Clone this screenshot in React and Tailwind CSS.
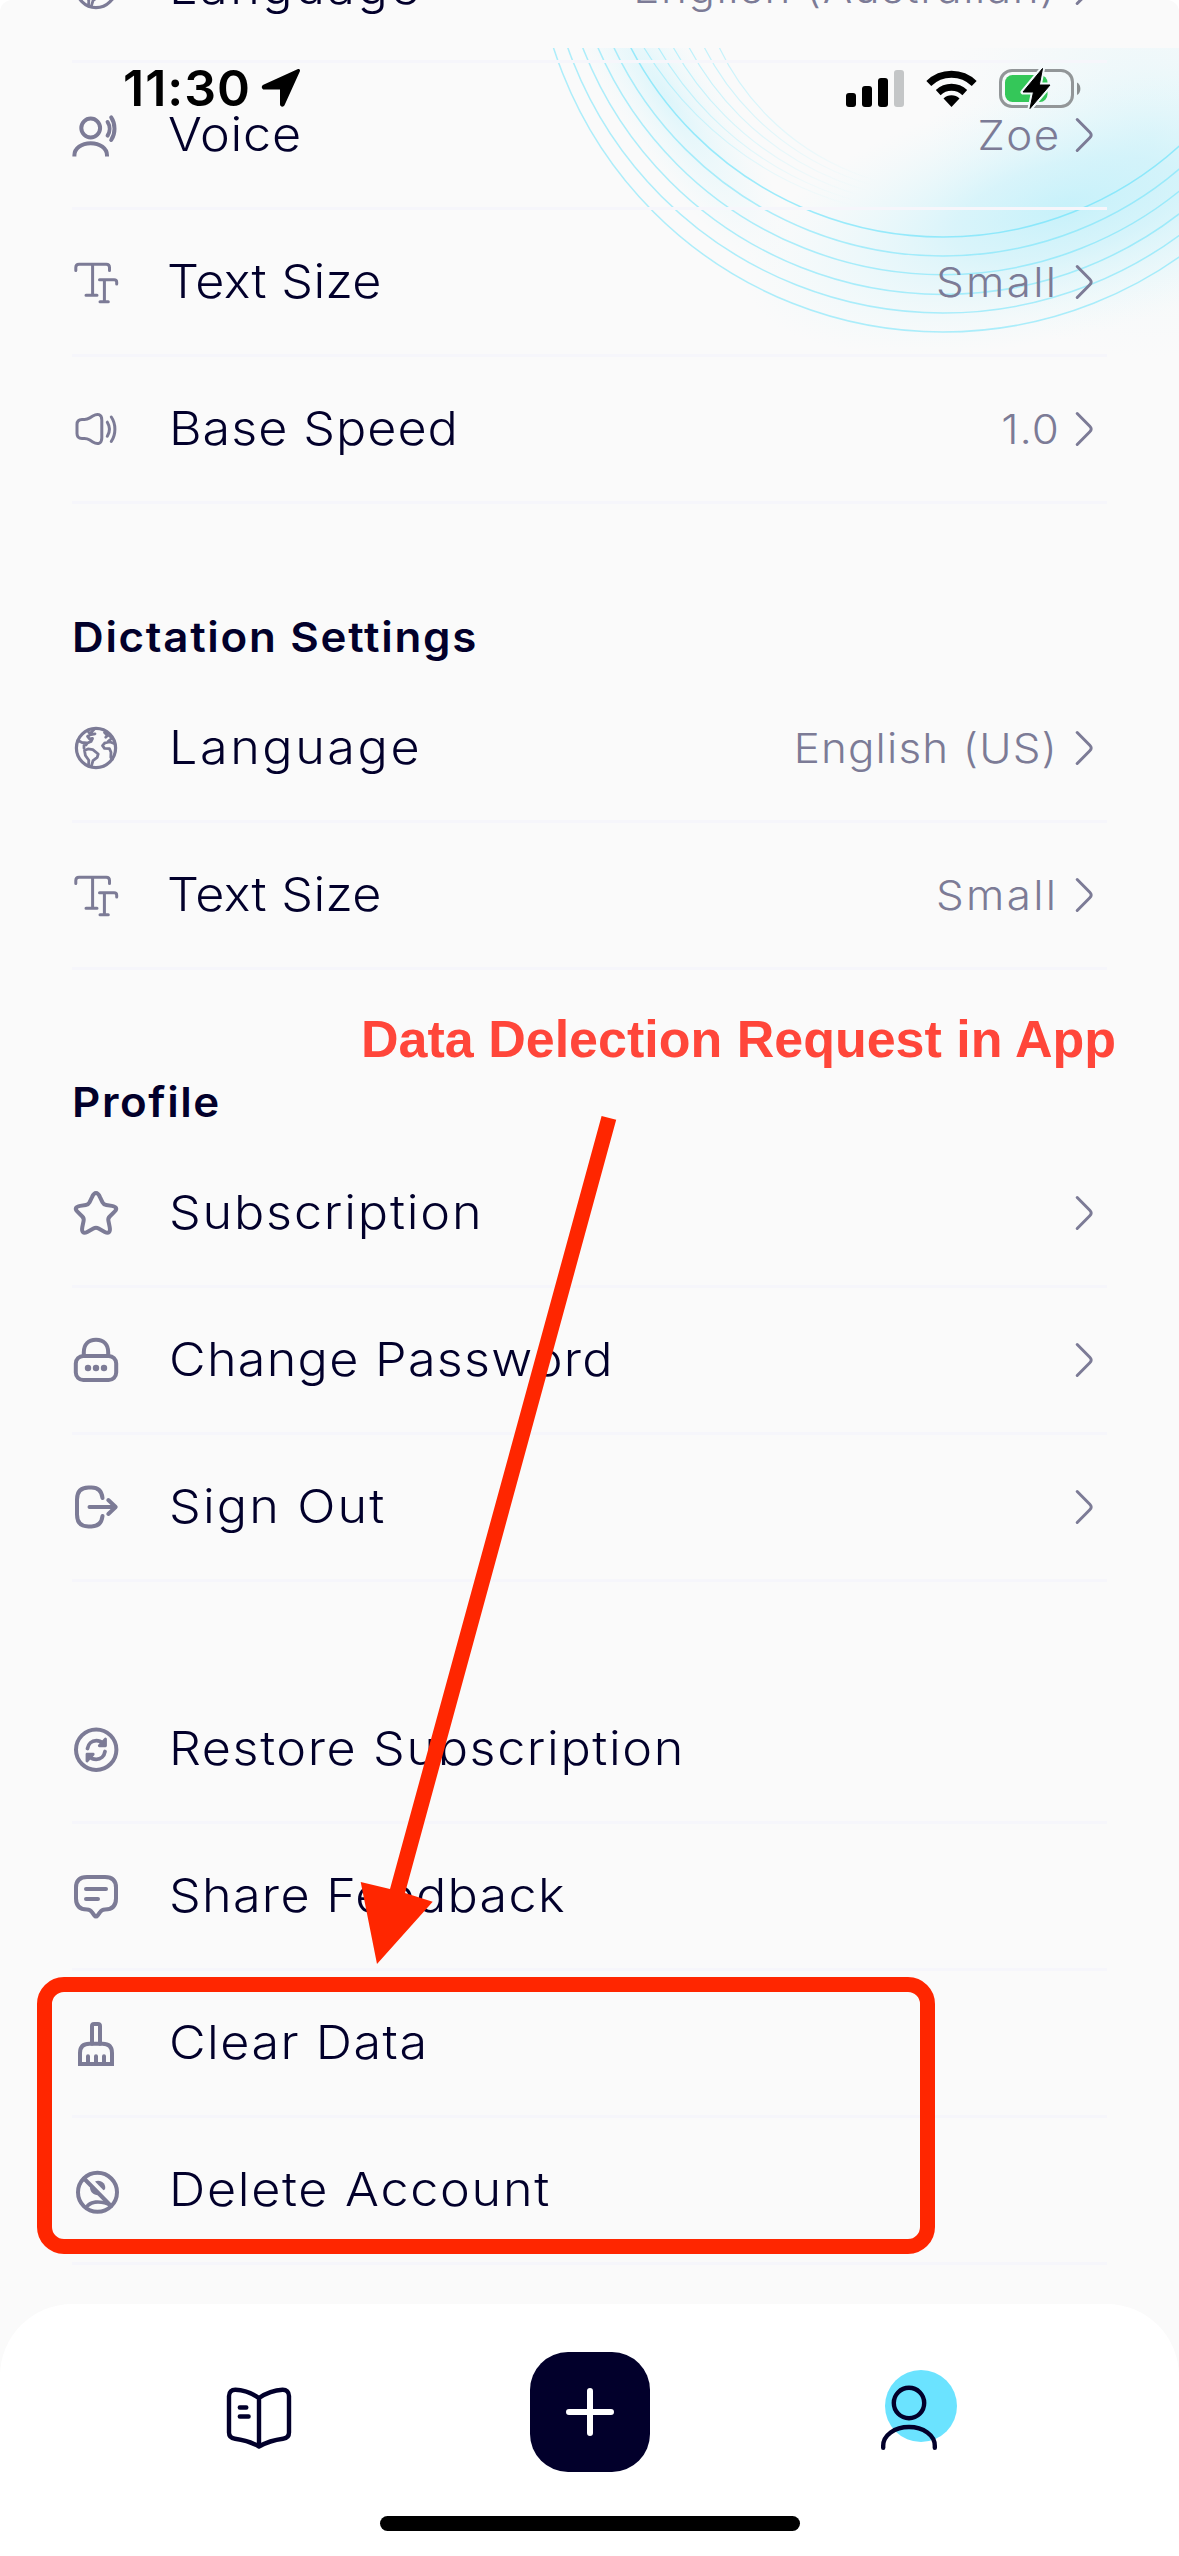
import React from 'react';

const INK = '#7c7b96';

function Icon({ children, width = 4 }) {
  return (
    <svg
      viewBox="0 0 48 48"
      className="h-12 w-12 shrink-0 overflow-visible"
      fill="none"
      stroke={INK}
      strokeWidth={width}
      strokeLinecap="round"
      strokeLinejoin="round"
    >
      {children}
    </svg>
  );
}

const GlobeIcon = () => (
  <Icon width={3.2}>
    <circle cx="24" cy="24" r="19.6" />
    <g strokeWidth="2.8">
      <path d="M6 16.500l4 2 4.500.3-2.500 2.500v3" />
      <path d="M12.500 26.500l3.500-1.600 4.800.8 5.400 4.300-1 3.400-4.200 3.200-1.800 6-2.700-.8.300-5.500-3.400-4.800z" />
      <path d="M16.500 8l2 2.500-3 2 2 2.500 3-.5-1.500 3-3.500 1.500-1.500 2M19 10.500l4-.7M22 5.500l-3 3" />
      <path d="M42 19.500l-4.500-1.700-4.500 1-2.500 2.800 2 2.800 5 .3 1.500 3.600-.2 5 1.500 2M36 17.500l3-2.500M32.500 8.500l3 3-1.800 1.800M37.500 12l2 1.500" />
    </g>
  </Icon>
);

const VoiceIcon = () => (
  <Icon>
    <circle cx="18.7" cy="17" r="9.4" />
    <path d="M2.4 45.6v-1.3C2.4 37.500 9.500 32.200 18.700 32.200S35 37.500 35 44.300v1.300" strokeLinecap="butt" />
    <path d="M35.600 11c2.600 4 2.600 9.600 0 13.600" />
    <path d="M39.200 6.400c4.400 6.400 4.400 16 0 22.600" />
  </Icon>
);

const TextIcon = () => (
  <Icon width={3}>
    <path d="M3.800 12.600V9.500Q3.800 6.200 7 6.200h27.300q3.200 0 3.200 3.300v3.100M20.600 6.200v31M14 37.200h11" />
    <path d="M27.500 21.800h14.600q2.600 0 2.600 2.400v1.800M32.400 21.800v22M28 43.800h8.300" />
  </Icon>
);

const SpeakerIcon = () => (
  <Icon width={3}>
    <path d="M5 19.500c0-3.200 1.800-5 5-5h2.500c2 0 3.500-.5 5.300-1.600l3-1.900c4.500-2.800 9-2 9 4v18c0 6-4.500 6.800-9 4l-3-1.900c-1.800-1.100-3.300-1.600-5.300-1.600H10c-3.200 0-5-1.800-5-5z" />
    <path d="M35.300 17.200c2.700 4.300 2.700 9.700 0 14" />
    <path d="M39.300 12c4.800 7 4.800 17.400 0 24.400" />
  </Icon>
);

const StarIcon = () => (
  <Icon>
    <path d="M24 4.100c1.700 0 2.900 1.500 4.100 4.300l2.400 5c.8 1.600 1.900 2.300 3.700 2.600l5.600.9c4.600.8 5.700 2.900 2.800 5.700l-4.900 4.900c-1.300 1.300-1.700 2.500-1.300 4.300l1.300 6.300c.9 4.800-1 6.900-4.900 4.800l-6.200-3.500c-1.800-1-3.400-1-5.200 0l-6.200 3.500c-3.900 2.100-5.800 0-4.900-4.800l1.300-6.300c.4-1.800 0-3-1.300-4.300l-4.900-4.900C2.500 19.800 3.600 17.700 8.200 16.900l5.600-.9c1.800-.3 2.900-1 3.700-2.600l2.400-5C21.100 5.600 22.300 4.100 24 4.100z" />
  </Icon>
);

const LockIcon = () => (
  <Icon>
    <rect x="3.800" y="20" width="40.400" height="24" rx="7.500" />
    <path d="M11.800 20v-3.500C11.800 8.500 16.400 3.800 24 3.800s12.200 4.700 12.200 12.700V20" />
    <g fill={INK} stroke="none">
      <circle cx="16" cy="32" r="3.200" />
      <circle cx="24" cy="32" r="3.200" />
      <circle cx="32" cy="32" r="3.200" />
    </g>
  </Icon>
);

const SignOutIcon = () => (
  <Icon>
    <path d="M30.500 15C29.700 7.600 26 4.600 19.500 4.600h-3C8.500 4.600 5 8.600 5 16.600v14.800c0 8 3.500 12 11.500 12h3c6.500 0 10.200-3 11-10.400" />
    <path d="M17.500 24H43M36.300 17l7.400 7-7.400 7" />
  </Icon>
);

const RestoreIcon = () => (
  <Icon>
    <circle cx="24.200" cy="24.700" r="20.200" />
    <path d="M15.500 23.500c.8-4.800 4.200-7.800 8.800-7.800 2.600 0 4.800.9 6.400 2.500M33 26.500c-.8 4.800-4.200 7.800-8.800 7.800-2.600 0-4.800-.9-6.400-2.500" strokeWidth="3.800" />
    <path d="M33.500 14v6.800h-6.200zM15 36v-6.800h6.200z" fill={INK} strokeWidth="2.800" />
  </Icon>
);

const FeedbackIcon = () => (
  <Icon>
    <path d="M15 5h18c7.500 0 11 3.500 11 10.500v11c0 7-3.500 11-11 11-2.800 0-3.800.8-5.200 3l-2.200 3c-1 1.400-2.200 1.400-3.200 0l-2.200-3c-1.400-2.200-2.400-3-5.200-3-7.500 0-11-4-11-11v-11C4 8.500 7.500 5 15 5z" />
    <path d="M14 17h20M14 27h12" />
  </Icon>
);

const BroomIcon = () => (
  <Icon>
    <path d="M20 24.800V7c0-1.400.7-2.100 2.100-2.100h3.800C27.300 4.900 28 5.600 28 7v17.800" />
    <path d="M8 45V34c0-6 3.500-9.200 9.500-9.200h13c6 0 9.500 3.200 9.500 9.200v11z" strokeLinejoin="miter" />
    <path d="M16 37.300V44M24 37.300V44M32 37.300V44" />
  </Icon>
);

const DeleteAccountIcon = () => (
  <Icon>
    <circle cx="25.500" cy="26.300" r="19.500" />
    <path d="M12 12.500l27 27.500" />
    <g fill={INK} stroke="none">
      <path d="M23 15.500c5.500-2.500 11.500 2 10 7.700l-1.500 1z" />
      <path d="M18 20.500c-.3 5.500 3.500 9 8.800 8.700z" />
      <path d="M12.500 41.500c2-4.800 7-7.200 13-7.200 4 0 7 .7 9.500 2l3 4.500c-4-2-7.500-3-12-3-4.200 0-7.500 1.200-10.500 4.500z" />
    </g>
  </Icon>
);

const Chevron = () => (
  <svg viewBox="0 0 18 36" className="mr-3.5 h-9 w-[18px] shrink-0" fill="none" stroke={INK} strokeWidth="3" strokeLinecap="round">
    <path d="M2.200 2.500L14.800 15.200q2.800 2.800 0 5.600L2.200 33.500" />
  </svg>
);

function Row({ icon: Glyph, label, labelClass, value, valueClass, chevron = true }) {
  return (
    <div className="flex h-[147px] items-center border-b-[3px] border-[#f6f6fb]">
      <Glyph />
      <span className={`mb-1 ml-[49px] origin-left scale-x-[1.07] whitespace-nowrap text-[47px] leading-none font-light text-[#02002b] ${labelClass}`}>
        {label}
      </span>
      <div className="ml-auto flex items-center gap-[15px]">
        {value && (
          <span className={`origin-right scale-x-[1.07] whitespace-nowrap text-[41px] leading-none font-light text-[#7c7b96] ${valueClass}`}>
            {value}
          </span>
        )}
        {chevron && <Chevron />}
      </div>
    </div>
  );
}

function Heading({ children, className }) {
  return (
    <h2 className={`flex origin-left scale-x-[1.07] items-end text-[41px] leading-[50px] font-semibold text-[#02002b] ${className}`}>
      {children}
    </h2>
  );
}

const RINGS = [
  [943, -77, 409, 0.5],
  [943, -85, 398, 0.5],
  [943, -92, 386.400, 0.5],
  [943, -101, 375.700, 0.5],
  [943, -108, 364, 0.5],
  [943, -115, 352, 0.6],
];

const FAINT_RINGS = [
  [945, -133, 351],
  [945, -118, 331],
  [945, -104, 311],
  [945, -89, 290],
  [945, -75, 270],
  [945, -60, 250],
];

function Decoration() {
  return (
    <svg viewBox="520 48 659 330" className="absolute top-12 right-0 h-[330px] w-[659px]" fill="none">
      <defs>
        <radialGradient id="glow" gradientUnits="userSpaceOnUse" cx="0" cy="0" r="1" gradientTransform="translate(1065 208) rotate(-14) scale(330 128)">
          <stop offset="0" stopColor="#bff0fa" stopOpacity="0.85" />
          <stop offset="0.35" stopColor="#c8f1fa" stopOpacity="0.65" />
          <stop offset="0.7" stopColor="#d8f5fb" stopOpacity="0.3" />
          <stop offset="1" stopColor="#e6f8fc" stopOpacity="0" />
        </radialGradient>
        <radialGradient id="edge" gradientUnits="userSpaceOnUse" cx="0" cy="0" r="1" gradientTransform="translate(665 95) rotate(56) scale(210 52)">
          <stop offset="0" stopColor="#c9f2fb" stopOpacity="0.6" />
          <stop offset="1" stopColor="#e6f8fc" stopOpacity="0" />
        </radialGradient>
        <radialGradient id="side" gradientUnits="userSpaceOnUse" cx="1150" cy="140" r="220">
          <stop offset="0" stopColor="#d2f3fa" stopOpacity="0.55" />
          <stop offset="1" stopColor="#eaf8fb" stopOpacity="0" />
        </radialGradient>
        <linearGradient id="fade" gradientUnits="userSpaceOnUse" x1="660" y1="40" x2="840" y2="220">
          <stop offset="0" stopColor="#86e8fc" stopOpacity="0.6" />
          <stop offset="1" stopColor="#a8effc" stopOpacity="0" />
        </linearGradient>
      </defs>
      <rect x="520" y="48" width="659" height="330" fill="url(#edge)" />
      <rect x="520" y="48" width="659" height="330" fill="url(#side)" />
      <rect x="520" y="48" width="659" height="330" fill="url(#glow)" />
      {RINGS.map(([cx, cy, r, o]) => (
        <circle key={r} cx={cx} cy={cy} r={r} stroke="#5fe1fb" strokeOpacity={o} strokeWidth="1.500" />
      ))}
      {FAINT_RINGS.map(([cx, cy, r]) => (
        <circle key={r} cx={cx} cy={cy} r={r} stroke="url(#fade)" strokeWidth="1.200" />
      ))}
    </svg>
  );
}

function StatusBar() {
  return (
    <div className="absolute inset-x-0 top-[58px] flex h-[60px] items-center justify-between pr-[97px] pl-[123px]">
      <div className="flex items-center gap-2.5">
        <span className="text-[50px] leading-none font-semibold tracking-[1px] text-black">11:30</span>
        <svg viewBox="0 0 40 40" className="h-10 w-10">
          <path d="M36.500 1.300c1.800-.8 3 .5 2.300 2.300L23.500 37.300c-1 2.200-4.500 1.700-4.500-1V21.500H3.400c-3 0-3.500-3.500-1-4.700z" fill="#000" />
        </svg>
      </div>
      <div className="flex items-center gap-[22px]">
        <svg viewBox="0 0 58 37" className="h-[37px] w-[58px]">
          <rect x="0" y="23" width="10" height="14" rx="3" />
          <rect x="16" y="16" width="10" height="21" rx="3" />
          <rect x="32" y="8" width="10" height="29" rx="3" />
          <rect x="48" y="0" width="10" height="37" rx="3" fill="#c4c6c7" />
        </svg>
        <svg viewBox="0 0 51 37" className="h-[37px] w-[51px]">
          <path d="M17.500 28.500a11.500 11.500 0 0 1 16 0L25.500 37z" />
          <path d="M12.200 22.600a19.500 19.500 0 0 1 26.600 0" fill="none" stroke="#000" strokeWidth="7" />
          <path d="M2.800 13.400a32.500 32.500 0 0 1 45.400 0" fill="none" stroke="#000" strokeWidth="7" />
        </svg>
        <svg viewBox="0 0 83 41" className="h-[41px] w-[83px]">
          <rect x="1.500" y="2.500" width="72" height="36" rx="11.500" fill="none" stroke="#929698" strokeWidth="3" />
          <path d="M78 14.500c4.500 2 4.500 10.500 0 12.500z" fill="#8a8f90" />
          <rect x="6" y="7" width="42.500" height="27" rx="7.500" fill="#34c759" />
          <path d="M43.500.5L24 24h10.500L31 40.500 51 17H40.300z" fill="#000" stroke="#f2f9fb" strokeWidth="5" strokeLinejoin="round" />
          <path d="M43.500.5L24 24h10.500L31 40.500 51 17H40.300z" fill="#000" stroke="#000" strokeWidth="1" strokeLinejoin="round" />
        </svg>
      </div>
    </div>
  );
}

function TabBar() {
  return (
    <nav className="absolute inset-x-0 bottom-0 flex h-[252px] flex-col items-center justify-between rounded-t-[72px] bg-white pt-12 pb-[25px]">
      <div className="grid w-full grid-cols-[529.5px_120px_529.5px] items-center">
        <svg viewBox="0 0 66 62" className="ml-[226px] h-[62px] w-[66px] translate-y-1.5" fill="none" stroke="#02002b" strokeWidth="4.400" strokeLinecap="round" strokeLinejoin="round">
          <path d="M33 11C26.500 6.500 18 3 9.500 2.700 5.500 2.600 3 5 3 9v36.500c0 4 2 5.800 6 6.200C18 52.800 26 55.500 33 59.500c7-4 15-6.700 24-7.800 4-.4 6-2.200 6-6.200V9c0-4-2.500-6.400-6.500-6.300C48 3 39.500 6.500 33 11zM33 11v48.500" />
          <path d="M13.800 20.500h6.500M13.800 29.500h8.800" />
        </svg>
        <button className="flex h-[120px] w-[120px] items-center justify-center rounded-[38px] bg-[#02002b]">
          <svg viewBox="0 0 48 48" className="h-12 w-12" stroke="#fff" strokeWidth="6" strokeLinecap="round">
            <path d="M3 24h42M24 3v42" />
          </svg>
        </button>
        <svg viewBox="0 0 76 82" className="ml-[231px] h-[82px] w-[76px] -translate-y-px" fill="none" stroke="#02002b" strokeWidth="4.400" strokeLinecap="round">
          <circle cx="40" cy="36" r="36" fill="#6be3ff" stroke="none" />
          <circle cx="28" cy="33" r="15.200" />
          <path d="M2.200 77.800v-2C2.200 65.500 13.500 57 28 57s25.800 8.500 25.800 18.800v2" />
        </svg>
      </div>
      <div className="h-[15px] w-[420px] rounded-full bg-black" />
    </nav>
  );
}

function Annotations() {
  return (
    <>
      <p className="absolute top-[1009px] left-[361px] whitespace-nowrap font-['Liberation_Sans'] text-[52px] leading-[60px] font-bold text-[#ff463a]">
        Data Delection Request in App
      </p>
      <svg viewBox="360 1116 260 850" className="absolute top-[1116px] left-[360px] h-[850px] w-[260px]" fill="#ff2600">
        <path d="M601.600 1116l14.600 3.700L405 1893l27.700 8.800L377 1964l-16.300-82 29.300 7z" />
      </svg>
      <div className="absolute top-[1977px] left-[37px] h-[277px] w-[898px] rounded-[27px] border-[15px] border-[#ff2600]" />
    </>
  );
}

export default function App() {
  return (
    <div className="relative h-[2556px] w-[1179px] overflow-hidden bg-white font-['Inter',sans-serif]">
      <div className="relative h-full overflow-hidden rounded-t-[12px] bg-[#fafafa]">
        <Decoration />
        <main className="relative -mt-[84px] pr-[72px] pl-[72px]">
          <Row icon={GlobeIcon} label="Language" labelClass="tracking-[2.4px]" value="English (Australian)" valueClass="tracking-[1.5px] mr-[3px]" />
          <Row icon={VoiceIcon} label="Voice" labelClass="tracking-[0.7px] -translate-x-px" value="Zoe" valueClass="tracking-[1.3px]" />
          <Row icon={TextIcon} label="Text Size" labelClass="tracking-[0.3px] -translate-x-0.5" value="Small" valueClass="tracking-[2.2px] mr-0.5" />
          <Row icon={SpeakerIcon} label="Base Speed" labelClass="tracking-[0.9px]" value="1.0" valueClass="tracking-[0.9px]" />
          <Heading className="h-[172px] pb-[14px] tracking-[1.6px]">Dictation Settings</Heading>
          <Row icon={GlobeIcon} label="Language" labelClass="tracking-[2.4px]" value="English (US)" valueClass="tracking-[1.1px] mr-0.5" />
          <Row icon={TextIcon} label="Text Size" labelClass="tracking-[0.3px] -translate-x-0.5" value="Small" valueClass="tracking-[2.2px] mr-0.5" />
          <Heading className="h-[171px] pb-[14px] tracking-[1.5px]">Profile</Heading>
          <Row icon={StarIcon} label="Subscription" labelClass="tracking-[1.7px]" />
          <Row icon={LockIcon} label="Change Password" labelClass="tracking-[1.2px]" />
          <Row icon={SignOutIcon} label="Sign Out" labelClass="tracking-[2px]" />
          <div className="h-[95px]" />
          <Row icon={RestoreIcon} label="Restore Subscription" labelClass="tracking-[1.5px]" chevron={false} />
          <Row icon={FeedbackIcon} label="Share Feedback" labelClass="tracking-[1.2px]" chevron={false} />
          <Row icon={BroomIcon} label="Clear Data" labelClass="tracking-[1.4px]" chevron={false} />
          <Row icon={DeleteAccountIcon} label="Delete Account" labelClass="tracking-[1.6px]" chevron={false} />
        </main>
        <StatusBar />
        <TabBar />
        <Annotations />
      </div>
    </div>
  );
}
